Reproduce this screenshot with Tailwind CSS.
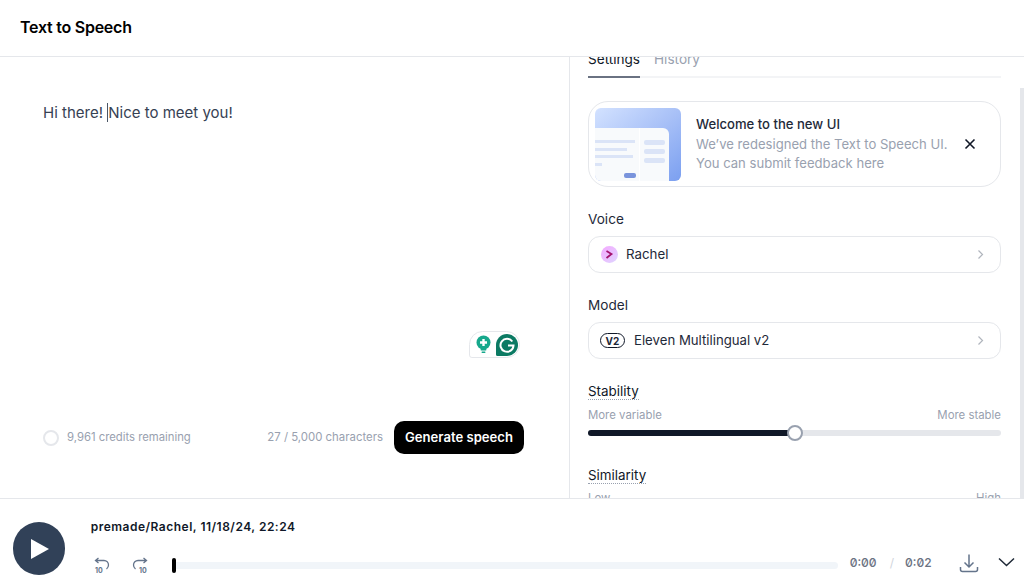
<!doctype html>
<html lang="en">
<head>
<meta charset="UTF-8" />
<title>Text to Speech</title>
<script src="https://cdn.jsdelivr.net/npm/@tailwindcss/browser@4"></script>
</head>
<body class="h-[588px] w-[1024px] overflow-hidden bg-white font-['Inter',sans-serif] text-gray-900">
  <!-- Header -->
  <header class="h-[57px] border-b border-gray-200 flex items-center pl-[20px] pb-[2px]">
    <h1 class="text-[16px] font-semibold tracking-[-0.25px] text-black">Text to Speech</h1>
  </header>

  <main class="flex h-[441px]">
    <!-- Editor -->
    <section class="relative w-[570px] border-r border-gray-200 flex flex-col pl-[43px] pr-[45px]">
      <p class="mt-[46px] text-[15px] leading-[20px] text-gray-700">Hi there! <span class="inline-block w-px h-[19px] align-[-4px] bg-gray-600"></span>Nice to meet you!</p>

      <div class="absolute left-[469px] top-[274px] w-[51px] h-[27px] rounded-t-[14px] rounded-br-[14px] rounded-bl-[3px] border border-gray-200 bg-white flex items-center gap-[5px] pl-[6px]">
        <svg width="15" height="19" viewBox="0 0 15 19">
          <circle cx="7.5" cy="7.5" r="7" fill="#16a88c" />
          <rect x="4.5" y="14" width="6" height="1.6" rx=".8" fill="#16a88c" />
          <rect x="5.5" y="16.5" width="4" height="1.4" rx=".7" fill="#16a88c" />
          <path d="M7.5 4v7M4 7.5h7" stroke="#fff" stroke-width="2.4" />
        </svg>
        <svg width="22" height="22" viewBox="0 0 22 22">
          <path d="M11 0a11 11 0 1 1 0 22H1.5a1.500 1.500 0 0 1-1.500-1.500V11A11 11 0 0 1 11 0z" fill="#0b7a63" />
          <path d="M16.300 7.500A6.500 6.500 0 1 0 17.500 11.500h-5.500" fill="none" stroke="#fff" stroke-width="2" />
        </svg>
      </div>

      <div class="mt-auto mb-[44px] flex items-center h-[33px]">
        <span class="w-[16px] h-[16px] rounded-full border-2 border-gray-200"></span>
        <span class="ml-[8px] text-[11.300px] text-gray-400">9,961 credits remaining</span>
        <span class="ml-auto text-[11.400px] text-gray-400">27 / 5,000 characters</span>
        <button class="ml-[11px] w-[130px] h-[33px] rounded-[10px] bg-black text-white text-[13.100px] font-semibold">Generate speech</button>
      </div>
    </section>

    <!-- Settings panel -->
    <aside class="relative flex-1 overflow-hidden pl-[18px] pr-[23px]">
      <div class="absolute right-0 top-[31px] bottom-0 w-[4px] bg-gray-200"></div>

      <div class="-mt-[7px] flex gap-[14px] border-b-2 border-gray-100 h-[28px] text-[13.600px] leading-[18px]">
        <span class="h-[28px] w-[52px] border-b-2 border-gray-500 text-gray-900">Settings</span>
        <span class="text-gray-400">History</span>
      </div>

      <div class="mt-[23px] h-[86px] rounded-[20px] border border-gray-200 flex items-center pl-[6px]">
        <div class="relative w-[86px] h-[73px] rounded-[6px] overflow-hidden bg-gradient-to-br from-[#d3e2ff] via-[#a9c1f7] to-[#7b9ff0]">
          <div class="absolute left-0 top-[20px] w-[74px] h-[53px] rounded-tr-[6px] bg-slate-50 flex">
            <div class="w-[45px] border-r border-white pt-[12px]">
              <div class="h-[3px] w-[40px] bg-[#dbe4f7]"></div>
              <div class="mt-[5px] h-[3px] w-[32px] bg-[#dbe4f7]"></div>
              <div class="mt-[4px] h-[3px] w-[38px] bg-[#dbe4f7]"></div>
              <div class="mt-[5px] h-[3px] w-[7px] bg-[#dbe4f7]"></div>
            </div>
            <div class="pl-[4px] pt-[12px]">
              <div class="h-[5px] w-[21px] rounded-[2px] bg-[#dbe4f7]"></div>
              <div class="mt-[4px] h-[5px] w-[21px] rounded-[2px] bg-[#dbe4f7]"></div>
              <div class="mt-[4px] h-[5px] w-[21px] rounded-[2px] bg-[#dbe4f7]"></div>
            </div>
            <div class="absolute left-[29px] top-[45px] w-[12px] h-[5px] rounded-[2px] bg-[#7a94dc]"></div>
          </div>
        </div>
        <div class="ml-[15px] w-[268px]">
          <p class="text-[13.100px] leading-[19px] font-medium text-gray-800">Welcome to the new UI</p>
          <p class="mt-[1px] text-[13.100px] leading-[19px] text-gray-400 whitespace-nowrap">We’ve redesigned the Text to Speech UI.</p>
          <p class="text-[13.100px] leading-[19px] text-gray-400">You can submit feedback here</p>
        </div>
        <svg width="12" height="12" viewBox="0 0 12 12"><path d="M1.500 1.500l9 9M10.500 1.500l-9 9" stroke="#111827" stroke-width="1.600" /></svg>
      </div>

      <label class="block mt-[23px] text-[13.600px] leading-[18px] text-gray-800">Voice</label>
      <div class="mt-[8px] h-[37px] rounded-[12px] border border-gray-200 flex items-center pl-[12px] pr-[16px]">
        <span class="relative w-[17px] h-[17px] rounded-full bg-gradient-to-br from-fuchsia-300 to-violet-200 flex items-center justify-center">
          <svg width="9" height="9" viewBox="0 0 9 9"><path d="M1.500 1l5 3-5 4" fill="none" stroke="#a3126f" stroke-width="1.800" /></svg>
        </span>
        <span class="ml-[8px] text-[13.300px] text-gray-800">Rachel</span>
        <svg class="ml-auto" width="7" height="11" viewBox="0 0 7 11"><path d="M1.500 1.500l4 4-4 4" fill="none" stroke="#b0b5bd" stroke-width="1.200" /></svg>
      </div>

      <label class="block mt-[23px] text-[13.600px] leading-[18px] text-gray-800">Model</label>
      <div class="mt-[8px] h-[37px] rounded-[12px] border border-gray-200 flex items-center pl-[11px] pr-[16px]">
        <span class="w-[25px] h-[15px] rounded-full border border-gray-900 flex items-center justify-center text-[10px] font-bold leading-none text-gray-800">V2</span>
        <span class="ml-[9px] text-[13.200px] text-gray-800">Eleven Multilingual v2</span>
        <svg class="ml-auto" width="7" height="11" viewBox="0 0 7 11"><path d="M1.500 1.500l4 4-4 4" fill="none" stroke="#b0b5bd" stroke-width="1.200" /></svg>
      </div>

      <div class="mt-[23px] text-[13.400px] leading-[18px] text-gray-900"><span class="border-b border-dotted border-gray-400">Stability</span></div>
      <div class="mt-[7px] flex justify-between text-[11.400px] leading-[16px] text-gray-400">
        <span>More variable</span><span>More stable</span>
      </div>
      <div class="relative mt-[7px] h-[6px] rounded-full bg-gray-200">
        <div class="h-full w-[207px] rounded-full bg-gray-900"></div>
        <div class="absolute left-[199px] -top-[5px] w-[16px] h-[16px] rounded-full bg-white border-2 border-gray-400"></div>
      </div>

      <div class="mt-[30px] text-[13.400px] leading-[18px] text-gray-900"><span class="border-b border-dotted border-gray-400">Similarity</span></div>
      <div class="mt-[6px] flex justify-between text-[11.400px] leading-[16px] text-gray-400">
        <span>Low</span><span>High</span>
      </div>
    </aside>
  </main>

  <!-- Player -->
  <footer class="relative z-10 h-[90px] border-t border-gray-200 bg-white flex pl-[13px]">
    <button class="mt-[23px] w-[53px] h-[53px] pl-[3px] rounded-full bg-slate-700 flex items-center justify-center">
      <svg width="20" height="22" viewBox="0 0 20 22"><path d="M1 1l18 10L1 21z" fill="#fff" /></svg>
    </button>
    <div class="ml-[26px] flex-1 pr-[9px]">
      <p class="mt-[19px] text-[12px] leading-[18px] font-semibold tracking-[0.5px] text-gray-900">premade/Rachel, 11/18/24, 22:24</p>
      <div class="mt-[17px] flex items-center h-[24px]">
        <svg class="ml-[3px]" width="16" height="16" viewBox="0 0 16 16">
          <path d="M4.500 1L1.500 3.500l3 2.500M1.500 3.500h8.500a4.500 4.500 0 0 1 4.500 4.500c0 1.800-.8 3-2 4" fill="none" stroke="#64748b" stroke-width="1.300" />
          <text x="1" y="15.500" font-size="7" font-weight="700" fill="#64748b" font-family="Inter">10</text>
        </svg>
        <svg class="ml-[22px]" width="16" height="16" viewBox="0 0 16 16">
          <path d="M11.500 1l3 2.500-3 2.500M14.500 3.500H6A4.500 4.500 0 0 0 1.500 8c0 1.800.8 3 2 4" fill="none" stroke="#64748b" stroke-width="1.300" />
          <text x="7" y="15.500" font-size="7" font-weight="700" fill="#64748b" font-family="Inter">10</text>
        </svg>
        <div class="relative ml-[24px] w-[666px] h-[7px] rounded-full bg-slate-100">
          <div class="absolute left-0 -top-[4px] w-[4px] h-[15px] rounded-full bg-black"></div>
        </div>
        <span class="-mt-[4px] ml-[12px] w-[28px] text-[12px] font-medium slashed-zero text-gray-500">0:00</span>
        <span class="-mt-[4px] ml-[12px] text-[12px] text-gray-300">/</span>
        <span class="-mt-[4px] ml-[11px] w-[28px] text-[12px] font-medium slashed-zero text-gray-500">0:02</span>
        <svg class="-mt-[4px] ml-[26px]" width="20" height="20" viewBox="0 0 20 20">
          <path d="M10 1.500v12M5.500 9.500l4.500 4.500 4.500-4.500M1.500 14v2.500a2 2 0 0 0 2 2h13a2 2 0 0 0 2-2V14" fill="none" stroke="#64748b" stroke-width="1.500" />
        </svg>
        <svg class="-mt-[6px] ml-[19px]" width="17" height="10" viewBox="0 0 17 10"><path d="M1 1.500l7.500 7 7.500-7" fill="none" stroke="#1f2937" stroke-width="1.500" /></svg>
      </div>
    </div>
  </footer>
</body>
</html>
